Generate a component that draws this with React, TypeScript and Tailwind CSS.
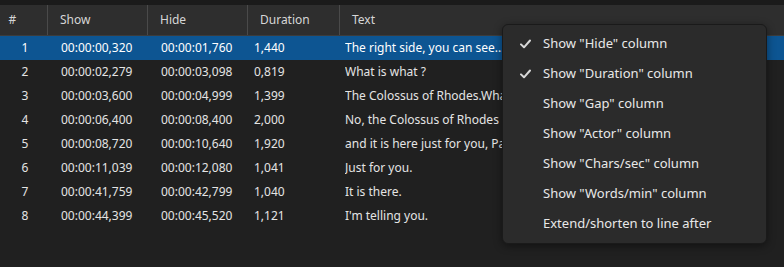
const rows = [
  { n: 1, show: '00:00:00,320', hide: '00:00:01,760', dur: '1,440', text: 'The right side, you can see...' },
  { n: 2, show: '00:00:02,279', hide: '00:00:03,098', dur: '0,819', text: 'What is what ?' },
  { n: 3, show: '00:00:03,600', hide: '00:00:04,999', dur: '1,399', text: 'The Colossus of Rhodes.What is it ?' },
  { n: 4, show: '00:00:06,400', hide: '00:00:08,400', dur: '2,000', text: 'No, the Colossus of Rhodes is not here.' },
  { n: 5, show: '00:00:08,720', hide: '00:00:10,640', dur: '1,920', text: 'and it is here just for you, Paul.' },
  { n: 6, show: '00:00:11,039', hide: '00:00:12,080', dur: '1,041', text: 'Just for you.' },
  { n: 7, show: '00:00:41,759', hide: '00:00:42,799', dur: '1,040', text: 'It is there.' },
  { n: 8, show: '00:00:44,399', hide: '00:00:45,520', dur: '1,121', text: "I'm telling you." },
];

const menuItems = [
  { label: 'Show "Hide" column', checked: true },
  { label: 'Show "Duration" column', checked: true },
  { label: 'Show "Gap" column', checked: false },
  { label: 'Show "Actor" column', checked: false },
  { label: 'Show "Chars/sec" column', checked: false },
  { label: 'Show "Words/min" column', checked: false },
  { label: 'Extend/shorten to line after', checked: false },
];

function Check() {
  return (
    <svg width="11" height="10" viewBox="0 0 11 10" className="text-[#d8d8d8]">
      <path d="M1 5.4 L4 8.3 L10 1.5" fill="none" stroke="currentColor" strokeWidth="2" strokeLinecap="round" strokeLinejoin="round" />
    </svg>
  );
}

export default function App() {
  return (
    <div className="relative w-[784px] h-[267px] overflow-hidden bg-[#202020] text-[12px] text-[#e4e4e4] font-['Noto_Sans','Open_Sans',sans-serif]">
      <div className="h-[5px] bg-[#1b1b1b]" />

      {/* Header */}
      <div className="flex h-[31px] bg-[#2e2e2e] border-b border-[#3c3c3c] text-[#d6d6d6]">
        <div className="w-[48px] flex items-center justify-center pr-[22px] border-r border-[#4a4a4a]">#</div>
        <div className="w-[100px] flex items-center pl-[12px] border-r border-[#4a4a4a]">Show</div>
        <div className="w-[100px] flex items-center pl-[12px] border-r border-[#4a4a4a]">Hide</div>
        <div className="w-[92px] flex items-center pl-[12px] border-r border-[#4a4a4a]">Duration</div>
        <div className="flex-1 flex items-center pl-[12px]">Text</div>
      </div>

      {/* Rows */}
      <div className="flex flex-col">
        {rows.map((r) => (
          <div key={r.n} className={`flex h-[24px] items-center whitespace-nowrap ${r.n === 1 ? 'bg-[#0d5592] text-white' : ''}`}>
            <div className="w-[48px] text-center pl-[2px]">{r.n}</div>
            <div className="w-[100px] pl-[13px]">{r.show}</div>
            <div className="w-[100px] pl-[13px]">{r.hide}</div>
            <div className="w-[97px] pl-[6px]">{r.dur}</div>
            <div className="flex-1 overflow-hidden">{r.text}</div>
          </div>
        ))}
      </div>

      {/* Context menu */}
      <div className="absolute left-[502px] top-[24px] w-[265px] py-[4px] rounded-[6px] bg-[#2b2b2b] border border-[#1a1a1a] shadow-[0_2px_8px_rgba(0,0,0,0.45)] text-[13px] text-[#e8e8e8]">
        {menuItems.map((m) => (
          <div key={m.label} className="flex items-center h-[30px]">
            <div className="w-[40px] flex justify-center pl-[4px]">{m.checked && <Check />}</div>
            <span>{m.label}</span>
          </div>
        ))}
      </div>
    </div>
  );
}
